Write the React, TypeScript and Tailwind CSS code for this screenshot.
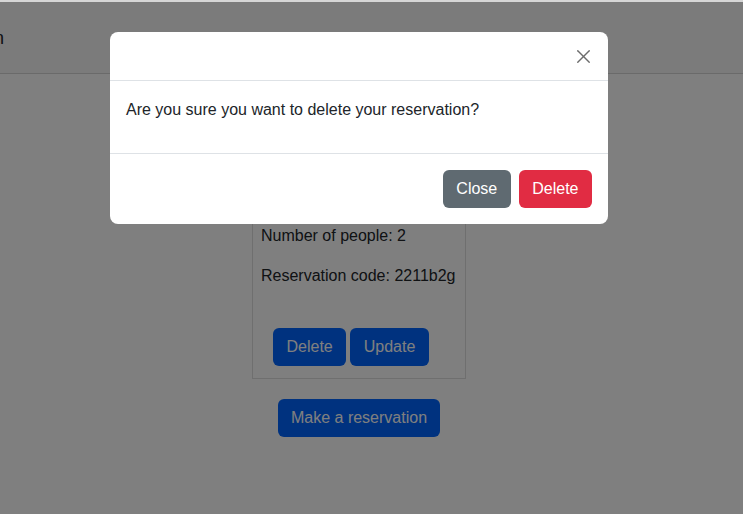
import { X } from "lucide-react";

const font = { fontFamily: '"Liberation Sans", Arial, sans-serif' };

function ReservationCard() {
	return (
		<div className="w-[214px] border border-[#dedede] px-2 pt-[129px] pb-3">
			<p className="mb-4 leading-6">Number of people: 2</p>
			<p className="mb-4 leading-6">Reservation code: 2211b2g</p>
			<div className="mt-10 ml-3 flex gap-1">
				<button className="rounded-md bg-[#0064fe] px-[13.5px] py-[7px] leading-6 text-white">
					Delete
				</button>
				<button className="rounded-md bg-[#0064fe] px-[13.5px] py-[7px] leading-6 text-white">
					Update
				</button>
			</div>
		</div>
	);
}

function DeleteModal() {
	return (
		<div className="fixed inset-x-0 top-[2px] bottom-0 bg-black/50">
			<div className="w-[718px]">
				<div className="mx-auto mt-[30px] w-[498px] overflow-hidden rounded-lg bg-white">
					<div className="flex h-[49px] items-center justify-end border-b border-[#dee2e6] pr-[13px]">
						<X className="text-[#6c6c6c]" size={23} strokeWidth={1.4} />
					</div>
					<div className="px-4 pt-[17px] pb-[15px]">
						<p className="mb-4 leading-6">
							Are you sure you want to delete your reservation?
						</p>
					</div>
					<div className="flex h-[71px] items-center justify-end gap-2 border-t border-[#dee2e6] pr-4">
						<button className="rounded-md bg-[#5f6a71] px-[13.5px] py-[7px] leading-6 text-white">
							Close
						</button>
						<button className="rounded-md bg-[#e12c43] px-[13.5px] py-[7px] leading-6 text-white">
							Delete
						</button>
					</div>
				</div>
			</div>
		</div>
	);
}

export default function App() {
	return (
		<div className="min-h-[514px] bg-white text-[16px] text-[#212529]" style={font}>
			<div className="relative z-10 h-[2px] bg-[#d6d6d6]" />
			<nav className="flex h-[72px] items-center border-b border-[#d4d4d4] bg-[#f6f6f6]">
				<span className="-ml-[6px] text-[18px] leading-6">n</span>
			</nav>
			<main className="flex w-[718px] flex-col items-center pt-5">
				<ReservationCard />
				<button className="mt-[20px] rounded-md bg-[#0064fe] px-[12.5px] py-[7px] leading-6 text-white">
					Make a reservation
				</button>
			</main>
			<DeleteModal />
		</div>
	);
}
